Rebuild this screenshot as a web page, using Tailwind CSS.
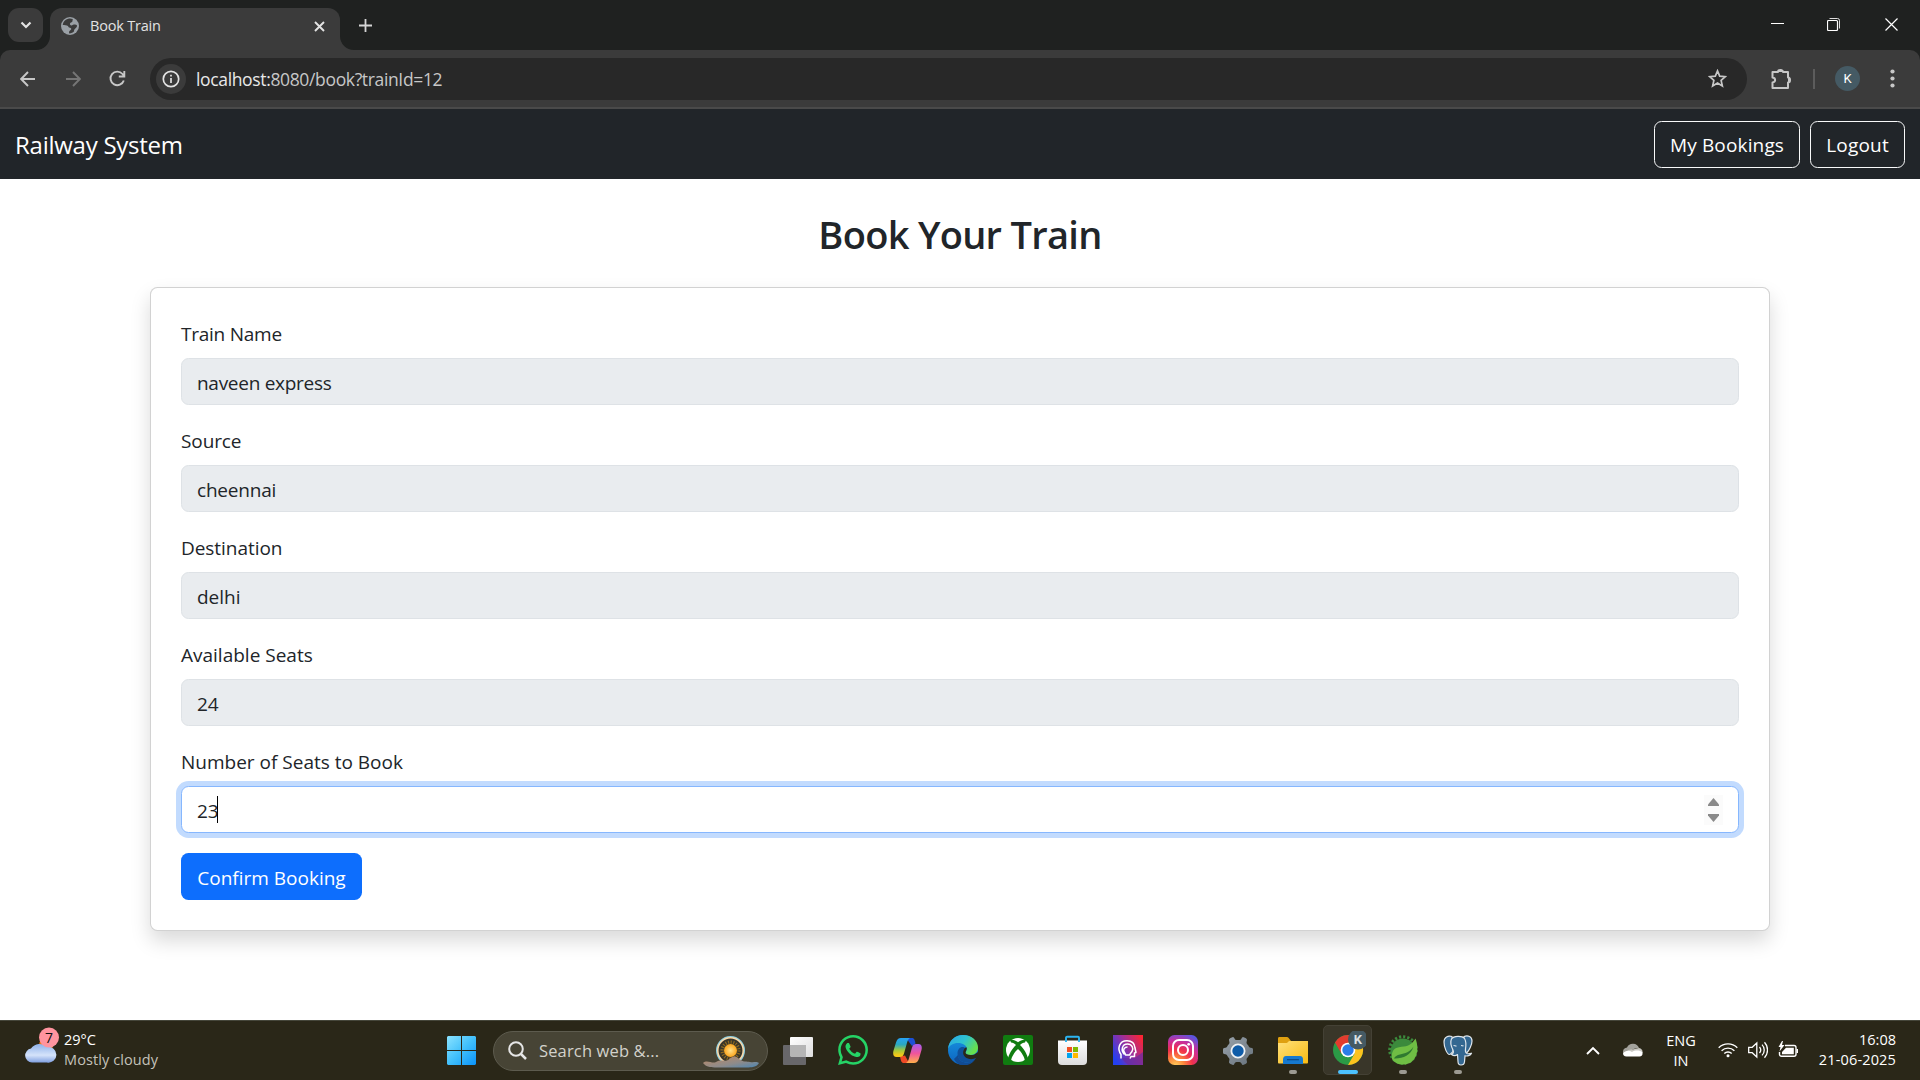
<!DOCTYPE html>
<html lang="en">
<head>
<meta charset="utf-8">
<title>Book Train</title>
<script src="https://cdn.jsdelivr.net/npm/@tailwindcss/browser@4"></script>
</head>
<body class="w-[1920px] h-[1080px] overflow-hidden flex flex-col bg-white font-['Open_Sans',sans-serif] text-[#212529]">

<!-- Browser tab strip -->
<header class="shrink-0 bg-[#1f2120]">
  <div class="h-[50px] flex items-start pt-2 pl-2">
    <button class="w-[35px] h-[34px] rounded-[11px] bg-[#3b3b3b] flex items-center justify-center">
      <svg width="12" height="8" viewBox="0 0 12 8" fill="none" stroke="#e3e3e3" stroke-width="2.2"><path d="M1.5 1.5 6 6l4.500-4.500"/></svg>
    </button>
    <div class="relative ml-[7px] w-[290px] h-[42px] rounded-t-[12px] bg-[#3b3b3b] flex items-center pl-[11px] pr-[15px] pb-[6px]">
      <svg class="absolute -left-[14px] bottom-0" width="14" height="14" viewBox="0 0 14 14"><path d="M14 0v14H0A14 14 0 0 0 14 0z" fill="#3b3b3b"/></svg>
      <svg class="absolute -right-[14px] bottom-0" width="14" height="14" viewBox="0 0 14 14"><path d="M0 0v14h14A14 14 0 0 1 0 0z" fill="#3b3b3b"/></svg>
      <svg width="18" height="18" viewBox="0 0 18 18"><circle cx="9" cy="9" r="9" fill="#9aa0a6"/><path d="M7.200 1.800C4.500 2.500 2.200 4.500 1.700 8c1.700.3 4.200-.2 5.200 1 .9 1 .6 1.500 2 1.700 1.300.2 1.600 1 1.200 1.900-.5 1-1.700 1.200-2 2.200-.2.800 0 1.400.2 1.700 2.200-.2 3.500-1 4.800-2.300-.2-1.200.3-1.700 1-2.400.9-.9 1.700-1.700 2-3-.6-1.300-2-1.200-3.300-1.200-1.200 0-1.200 1-2.300.9-1.300-.1-1.700-1-1.500-2 .3-1.200 1.500-1 2.100-1.600.6-.6.400-1.800.700-2.800-1.500-.6-3.200-.7-4.600-.3z" fill="#3b3b3b"/></svg>
      <span class="ml-[11px] text-[14.5px] tracking-[-0.2px] text-[#e3e3e3]">Book Train</span>
      <svg class="ml-auto" width="11" height="11" viewBox="0 0 11 11" stroke="#e3e3e3" stroke-width="1.900"><path d="M1 1l9 9M10 1l-9 9"/></svg>
    </div>
    <svg class="ml-[19px] mt-[11px]" width="13" height="13" viewBox="0 0 13 13" stroke="#d5d5d5" stroke-width="1.800"><path d="M6.500 0v13M0 6.500h13"/></svg>
    <div class="ml-auto flex items-center h-[34px] -mt-px">
      <svg class="mr-[43px]" width="13" height="13" viewBox="0 0 13 13" stroke="#fff" stroke-width="1"><path d="M0 5.500h13"/></svg>
      <svg class="mr-[45px]" width="13" height="13" viewBox="0 0 13 13" fill="none" stroke="#fff"><rect x=".5" y="2.500" width="10" height="10" rx="1" stroke-width="1.200"/><path d="M2.500 .5h8a2 2 0 0 1 2 2v8" stroke-width="1" stroke="#ddd"/></svg>
      <svg class="mr-[22px]" width="13" height="13" viewBox="0 0 13 13" stroke="#fff" stroke-width="1.200"><path d="M.5 .5l12 12M12.500 .5l-12 12"/></svg>
    </div>
  </div>
  <!-- Toolbar -->
  <div class="h-[59px] rounded-t-[10px] bg-[#3b3b3b] border-b-2 border-[#4a4a4a] flex items-center pl-5">
    <svg width="16" height="16" viewBox="0 0 16 16" fill="none" stroke="#c7c7c7" stroke-width="1.900"><path d="M15 8H1.500M8 1 1.200 8 8 15"/></svg>
    <svg class="ml-[29px]" width="16" height="16" viewBox="0 0 16 16" fill="none" stroke="#757575" stroke-width="1.900"><path d="M1 8h13.500M8 1l6.800 7L8 15"/></svg>
    <svg class="ml-[28px]" width="17" height="17" viewBox="0 0 17 17" fill="none" stroke="#c7c7c7" stroke-width="1.900"><path d="M14.800 10.500A6.800 6.800 0 1 1 13.500 4l1.300 1.700M15.300 1v5.500H9.800"/></svg>
    <div class="ml-[24px] w-[1597px] h-[42px] rounded-full bg-[#282828] flex items-center pl-[6px] pr-5">
      <span class="w-[30px] h-[30px] rounded-full bg-[#3b3b3b] flex items-center justify-center">
        <svg width="18" height="18" viewBox="0 0 18 18" fill="none"><circle cx="9" cy="9" r="7.700" stroke="#e3e3e3" stroke-width="1.700"/><path d="M9 8v5M9 4.800v1.800" stroke="#e3e3e3" stroke-width="1.700"/></svg>
      </span>
      <span class="ml-[10px] pt-px text-[17.5px] tracking-[-0.35px] text-[#c7c7c7]"><span class="text-[#e8e8e8]">localhost:</span>8080/book?trainId=12</span>
      <svg class="ml-auto" width="19" height="19" viewBox="0 0 20 20" fill="none" stroke="#c7c7c7" stroke-width="1.800"><path d="M10 2l2.300 5.500 6 .5-4.500 4 1.300 5.800L10 14.700l-5.100 3.100L6.200 12 1.700 8l6-.5z"/></svg>
    </div>
    <svg class="ml-[23px]" width="23" height="22" viewBox="0 0 23 22"><path d="M2.500 4h5.500a2.500 2 0 0 1 5 0h5v5.500a2 2.500 0 0 1 0 5V20H2.500v-5.500c3.500-.5 3.500-4.500 0-5z" fill="none" stroke="#c7c7c7" stroke-width="2" stroke-linejoin="round"/><path d="M8 4a2.500 2.500 0 0 1 5 0zM18 9.500a2.500 2.500 0 0 1 0 5z" fill="#c7c7c7"/></svg>
    <span class="ml-[20px] w-[2px] h-5 bg-[#5c5c5c]"></span>
    <span class="ml-[20px] w-[25px] h-[25px] rounded-full bg-[#455a64] text-white text-[13px] leading-none font-[Roboto] flex items-center justify-center">K</span>
    <svg class="ml-[30px]" width="5" height="19" viewBox="0 0 5 19" fill="#c7c7c7"><circle cx="2.500" cy="2.500" r="2.100"/><circle cx="2.500" cy="9.500" r="2.100"/><circle cx="2.500" cy="16.500" r="2.100"/></svg>
  </div>
</header>

<!-- Site navigation -->
<nav class="shrink-0 h-[70px] bg-[#212529] text-white flex items-center pl-[15px] pr-[15px] gap-[10px]">
  <span class="mr-auto pt-px text-[24px] tracking-[-0.26px]">Railway System</span>
  <button class="w-[146px] h-[47px] mt-[1px] rounded-[7.5px] border border-[#f8f9fa] text-[19px] tracking-[0.15px] pt-px flex items-center justify-center">My Bookings</button>
  <button class="w-[95px] h-[47px] mt-[1px] rounded-[7.5px] border border-[#f8f9fa] text-[19px] tracking-[0.2px] pt-px flex items-center justify-center">Logout</button>
</nav>

<main class="grow px-[150px] pt-[30px]">
  <h2 class="h-[48px] mb-[30px] text-center text-[38px] leading-[50px] font-semibold tracking-[-0.7px]">Book Your Train</h2>
  <form class="h-[644px] rounded-[7.5px] border border-black/[.175] bg-white p-[30px] shadow-[0_10px_20px_rgba(0,0,0,0.15)] text-[19px] leading-[30px]">
    <div class="mb-5">
      <label class="block h-[30px] pt-px mb-[10px] tracking-[-0.25px]">Train Name</label>
      <div class="h-[47px] rounded-[7.5px] border border-[#dee2e6] bg-[#e9ecef] px-[15px] pt-[2px] flex items-center tracking-[-0.28px]">naveen express</div>
    </div>
    <div class="mb-5">
      <label class="block h-[30px] pt-px mb-[10px] tracking-[-0.1px]">Source</label>
      <div class="h-[47px] rounded-[7.5px] border border-[#dee2e6] bg-[#e9ecef] px-[15px] pt-[2px] flex items-center tracking-[-0.2px]">cheennai</div>
    </div>
    <div class="mb-5">
      <label class="block h-[30px] pt-px mb-[10px] tracking-[-0.05px]">Destination</label>
      <div class="h-[47px] rounded-[7.5px] border border-[#dee2e6] bg-[#e9ecef] px-[15px] pt-[2px] flex items-center">delhi</div>
    </div>
    <div class="mb-5">
      <label class="block h-[30px] pt-px mb-[10px]">Available Seats</label>
      <div class="h-[47px] rounded-[7.5px] border border-[#dee2e6] bg-[#e9ecef] px-[15px] pt-[2px] flex items-center">24</div>
    </div>
    <div class="mb-5">
      <label class="block h-[30px] pt-px mb-[10px]">Number of Seats to Book</label>
      <div class="h-[47px] rounded-[7.5px] border border-[#86b7fe] bg-white px-[15px] flex items-center shadow-[0_0_0_5px_rgba(13,110,253,0.25)]">
        <span class="pt-[2px] tracking-[-0.2px]">23</span><span class="-ml-px w-px h-[27px] bg-black"></span>
        <span class="ml-auto w-[19px] h-[30px] bg-[#fbfbfb] flex flex-col items-center justify-between py-[3px]">
          <svg width="11" height="8" viewBox="0 0 11 8" fill="#8a8a8a"><path d="M5.500 0 11 6.500V8H0V6.500z"/></svg>
          <svg width="11" height="8" viewBox="0 0 11 8" fill="#8a8a8a"><path d="M5.500 8 11 1.500V0H0v1.500z"/></svg>
        </span>
      </div>
    </div>
    <button type="button" class="w-[181px] h-[47px] pt-[2px] rounded-[7.5px] bg-[#0d6efd] text-white flex items-center justify-center">Confirm Booking</button>
  </form>
</main>

<!-- Desktop taskbar -->
<footer class="shrink-0 h-[60px] bg-[#2a2718] border-t border-[#45463a] flex items-center text-white text-[14.5px]">
  <div class="w-[434px] h-full flex items-start pl-[24px]">
    <svg class="mt-[6px]" width="36" height="38" viewBox="0 0 36 38">
      <defs><linearGradient id="cl" x1="0" y1="0" x2="0" y2="1"><stop offset="0" stop-color="#8fb2ea"/><stop offset=".6" stop-color="#d5e3fa"/><stop offset="1" stop-color="#7f9fe0"/></linearGradient></defs>
      <circle cx="22" cy="18" r="7" fill="#f07a1a"/>
      <path d="M8 35.500a7 7 0 0 1-1-13.900A10.500 10.500 0 0 1 23 20a7.900 7.900 0 1 1 0 15.500z" fill="url(#cl)"/>
      <circle cx="25" cy="10.500" r="10" fill="#ff949f"/>
      <text x="25" y="15.500" text-anchor="middle" font-size="14" font-family="Open Sans" fill="#111">7</text>
    </svg>
    <div class="ml-[4px] mt-[9px] leading-5 flex flex-col items-start"><span>29°C</span><span class="tracking-[0.1px] text-[#c4c2ba]">Mostly cloudy</span></div>
  </div>
  <div class="w-[55px] flex justify-center">
    <svg width="29" height="29" viewBox="0 0 29 29"><defs><linearGradient id="win" x1="0" y1="0" x2="1" y2="1"><stop offset="0" stop-color="#8be3ff"/><stop offset=".5" stop-color="#42c0fb"/><stop offset="1" stop-color="#0a93fb"/></linearGradient></defs><path d="M1 0h13v14H0V1zM15 0h13l1 1v13H15zM0 15h14v14H1l-1-1zM15 15h14v13l-1 1H15z" fill="url(#win)"/></svg>
  </div>
  <div class="ml-[4px] w-[275px] h-[40px] rounded-full bg-[#474435] border border-[#5d5b4e] flex items-center pl-[14px] pr-[8px]">
    <svg width="19" height="19" viewBox="0 0 19 19" fill="none" stroke="#e6e6e6" stroke-width="2"><circle cx="8" cy="8" r="6.800"/><path d="M13 13l5 5" stroke-width="2.500"/></svg>
    <span class="ml-[12px] pt-px text-[16.5px] tracking-[0.15px] text-[#d3d2cb]">Search web &amp;...</span>
    <svg class="ml-auto" width="56" height="34" viewBox="0 0 56 34">
      <defs><linearGradient id="hill" x1="0" y1="0" x2="1" y2="1"><stop offset="0" stop-color="#c08a62"/><stop offset=".6" stop-color="#8d8b8b"/><stop offset="1" stop-color="#4b86b4"/></linearGradient><radialGradient id="sun"><stop offset="0" stop-color="#ffe08a"/><stop offset="1" stop-color="#fba51c"/></radialGradient></defs>
      <circle cx="27.500" cy="16.500" r="13.600" fill="#38352a" stroke="#8fd0e2" stroke-width="1.800"/>
      <circle cx="27.500" cy="16.500" r="12.700" fill="none" stroke="#fbd9a8" stroke-width="1.500"/>
      <circle cx="27.500" cy="16.500" r="8.300" fill="none" stroke="#8f6a1e" stroke-width="3.500" stroke-dasharray="1.100 1.500"/>
      <circle cx="27.500" cy="16.500" r="6.500" fill="url(#sun)"/>
      <path d="M0 29c4-4 9 1 13-1 5-3 9 0 12-2 4-3 6-5 10-2 5 5 9 3 12 4 4 1 6-1 9 1-2 4-8 4.500-12 4.500H14C8 33.500 3 33 0 29z" fill="url(#hill)"/>
    </svg>
  </div>
  <div class="ml-[2px] flex h-full">
    <div class="w-[55px] flex items-center justify-center">
      <svg width="30" height="28" viewBox="0 0 30 28"><defs><linearGradient id="tv" x1="0" y1="0" x2="1" y2="1"><stop offset="0" stop-color="#fff"/><stop offset="1" stop-color="#dedede"/></linearGradient></defs><rect x="7" y="0" width="23" height="20" rx="1" fill="url(#tv)"/><rect x="0" y="8" width="23" height="20" rx="1" fill="#68676a"/><path d="M7 8h16v12H8l-1-1z" fill="#b5b5b5"/></svg>
    </div>
    <div class="w-[55px] flex items-center justify-center">
      <svg class="-mt-px" width="30" height="30" viewBox="0 0 24 24" fill="#25d366"><path d="M17.472 14.382c-.297-.149-1.758-.867-2.030-.967-.273-.099-.471-.148-.67.150-.197.297-.767.966-.940 1.164-.173.199-.347.223-.644.075-.297-.150-1.255-.463-2.390-1.475-.883-.788-1.480-1.761-1.653-2.059-.173-.297-.018-.458.130-.606.134-.133.298-.347.446-.520.149-.174.198-.298.298-.497.099-.198.050-.371-.025-.520-.075-.149-.669-1.612-.916-2.207-.242-.579-.487-.500-.669-.510-.173-.008-.371-.010-.570-.010-.198 0-.520.074-.792.372-.272.297-1.040 1.016-1.040 2.479 0 1.462 1.065 2.875 1.213 3.074.149.198 2.096 3.200 5.077 4.487.709.306 1.262.489 1.694.625.712.227 1.360.195 1.871.118.571-.085 1.758-.719 2.006-1.413.248-.694.248-1.289.173-1.413-.074-.124-.272-.198-.570-.347m-5.421 7.403h-.004a9.870 9.870 0 0 1-5.031-1.378l-.361-.214-3.741.982.998-3.648-.235-.374a9.860 9.860 0 0 1-1.510-5.260c.001-5.450 4.436-9.884 9.888-9.884 2.640 0 5.122 1.030 6.988 2.898a9.825 9.825 0 0 1 2.893 6.994c-.003 5.450-4.437 9.884-9.885 9.884m8.413-18.297A11.815 11.815 0 0 0 12.050 0C5.495 0 .160 5.335.157 11.892c0 2.096.547 4.142 1.588 5.945L.057 24l6.305-1.654a11.882 11.882 0 0 0 5.683 1.448h.005c6.554 0 11.890-5.335 11.893-11.893a11.821 11.821 0 0 0-3.480-8.413z"/></svg>
    </div>
    <div class="w-[55px] flex items-center justify-center">
      <svg class="-mt-px" width="29" height="27" viewBox="0 0 29 27"><defs><linearGradient id="c1" x1="0" y1="0" x2="0" y2="1"><stop offset="0" stop-color="#27a3f5"/><stop offset=".35" stop-color="#2ba8c0"/><stop offset=".65" stop-color="#a5c83a"/><stop offset=".9" stop-color="#f3c818"/></linearGradient><linearGradient id="c2" x1="0" y1="0" x2="0" y2="1"><stop offset="0" stop-color="#a45cf0"/><stop offset=".5" stop-color="#f0559b"/><stop offset="1" stop-color="#ffb04a"/></linearGradient></defs>
      <path d="M13 1h6c2 0 2.700 1.500 3.500 5.500L19 9z" fill="#1b50d6"/><path d="M16 26h-5c-3 0-3-2.500-4-6.500l5-1z" fill="#ee4a26"/>
      <path d="M8 1h9c-2 1-2.500 3-3.200 5.500L11 16.500C10.300 19 9 20 7 20H3.500C.5 20-.3 17.500.4 14L3 5.500C4 2.300 5.500 1 8 1z" fill="url(#c1)"/>
      <path d="M21 26h-8c2-1 2.500-3 3.200-5.500L19 10.500C19.700 8 21 7 23 7h2.500c3 0 3.800 2.500 3 6L26 21.500C25 24.700 23.500 26 21 26z" fill="url(#c2)"/></svg>
    </div>
    <div class="w-[55px] flex items-center justify-center">
      <svg class="-mt-px" width="30" height="30" viewBox="0 0 30 30"><defs><linearGradient id="e1" x1="0" y1="0" x2="1" y2=".5"><stop offset="0" stop-color="#2aa6e6"/><stop offset=".55" stop-color="#2fc3cf"/><stop offset="1" stop-color="#67e04e"/></linearGradient><linearGradient id="e2" x1="0" y1="0" x2="0" y2="1"><stop offset="0" stop-color="#1795e2"/><stop offset="1" stop-color="#0d63bf"/></linearGradient></defs>
      <circle cx="15" cy="15" r="15" fill="url(#e2)"/>
      <path d="M10 20c0 5 5 8.500 10.500 7.500 3-.5 5-2 6.800-4C25 31 11 34 6 24z" fill="#114b93"/>
      <path d="M0 14C1 5 7.500 0 15 0c9 0 15 6 15 12.500 0 4.500-3 7.500-7.500 7.500-3.500 0-5-1.500-5-2.500s1.300-1.300 1.300-4c0-3-3.800-5.500-8.800-5.500C5 8 1.500 10.500 0 14z" fill="url(#e1)"/>
      <path d="M18 14c-3-4-8.500-1.500-8.500 4.500 0 6.500 6 10 11.500 8.800 3-.6 5.500-2.300 7.200-4.800.3-.7-.4-1.200-1-.8-4.500 2.300-11 .8-10-4.700.2-1 .8-1.800.8-3z" fill="#10509a"/>
      <path d="M18.800 12.500c.3 2.500-1.300 4-1.300 5 0 1.500 3 3.500 8.500 2.200L30 17v5l-2 1c-3 1.500-7 1.500-9.500 0-4-2.500-4.500-7-1-10.500z" fill="#2a2718"/></svg>
    </div>
    <div class="w-[55px] flex items-center justify-center">
      <svg class="-mt-px" width="30" height="30" viewBox="0 0 30 30"><rect width="30" height="30" rx="2" fill="#107c10"/><circle cx="15" cy="15" r="12" fill="#fff"/><path d="M7 5.200C9.500 4.200 12.500 5.500 15 7.200c2.500-1.700 5.500-3 8-2L22 7.500c-2 0-3.500 1-5 2.500 4 4 7.500 9.500 8 14l-3 2c-.5-4-3.500-9-7-12-3.500 3-6.500 8-7 12l-3-2c.5-4.500 4-10 8-14-1.500-1.500-3-2.500-5-2.500z" fill="#107c10"/></svg>
    </div>
    <div class="w-[55px] flex items-center justify-center">
      <svg class="-mt-px" width="29" height="30" viewBox="0 0 29 30"><defs><linearGradient id="st" x1="0" y1="0" x2="0" y2="1"><stop offset="0" stop-color="#fff"/><stop offset="1" stop-color="#dcdcdc"/></linearGradient></defs><path d="M0 5.500h29V26a4 4 0 0 1-4 4H4a4 4 0 0 1-4-4z" fill="url(#st)"/><path d="M8 7V2.800C8 2 8.500 1.800 9 1.800h11c.6 0 1 .4 1 1V7" fill="none" stroke="#2cb5f0" stroke-width="1.900"/><path fill="#f25022" d="M9 12h5v5H9z"/><path fill="#7fba00" d="M15 12h5v5h-5z"/><path fill="#00a4ef" d="M9 18h5v5H9z"/><path fill="#ffb900" d="M15 18h5v5h-5z"/></svg>
    </div>
    <div class="w-[55px] flex items-center justify-center">
      <svg class="-mt-px" width="30" height="30" viewBox="0 0 30 30"><defs><linearGradient id="pi" x1="0" y1=".7" x2="1" y2=".1"><stop offset="0" stop-color="#2440f0"/><stop offset=".5" stop-color="#9a2f9c"/><stop offset="1" stop-color="#ff2430"/></linearGradient></defs><path fill="url(#pi)" d="M0 0h30v30H0z"/><path d="M8 23h14l8-6v13H15z" fill="#6a2ca0" fill-opacity=".7"/><g fill="none" stroke="#fff" stroke-width="1.500" stroke-linejoin="round"><path d="M8 23.500v-4C4 14 6 5.800 14 5.800c5 0 7.700 3 8 7.200l1 4.500-1.500.5v3.500h-3.500l-1 2"/><path d="M11.500 19.500C7.500 15.500 9 9 14.500 9c4.500 0 6.500 4.500 4.500 7.500-1 1.500-2 2-2.200 3.500h-4.300c0-1.500-.7-2-1.300-3-1.500-2.500.3-5 3.300-5"/></g></svg>
    </div>
    <div class="w-[55px] flex items-center justify-center">
      <svg class="-mt-px" width="30" height="30" viewBox="0 0 30 30"><defs><radialGradient id="ig" cx=".25" cy="1.050" r="1.150"><stop offset="0" stop-color="#ffd560"/><stop offset=".25" stop-color="#fd8a3c"/><stop offset=".5" stop-color="#f0314c"/><stop offset=".75" stop-color="#c92f9b"/><stop offset="1" stop-color="#5a55e0"/></radialGradient></defs><rect width="30" height="30" rx="6.500" fill="url(#ig)"/><g fill="none" stroke="#fff" stroke-width="2"><rect x="5" y="5" width="20" height="20" rx="6"/><circle cx="15" cy="15" r="5"/></g><circle cx="20.700" cy="9.300" r="1.400" fill="#fff"/></svg>
    </div>
    <div class="w-[55px] flex items-center justify-center">
      <svg width="30" height="28" viewBox="0 0 30 28"><defs><linearGradient id="gr" x1="0" y1="0" x2="1" y2="1"><stop offset="0" stop-color="#9aa3ab"/><stop offset="1" stop-color="#66717b"/></linearGradient></defs><path d="M7.500 1 10 0q1 0 1.500 1.500Q12 3 13.500 3h3Q18 3 18.500 1.500 19 0 20 0l2.500 1q1.800.8 1.500 2l-.5 2.500Q23.500 7 25 8l.5 1q.7 1.500 2 1.700l1.500.3q1 .3 1 1.500v3q0 1.200-1 1.500l-1.500.3q-1.300.2-2 1.700l-.5 1q-1.500 1-1.500 2.500l.5 2.500q.3 1.200-1.500 2L20 28q-1 0-1.500-1.500Q18 25 16.500 25h-3q-1.500 0-2 1.500Q11 28 10 28l-2.500-1q-1.800-.8-1.500-2l.5-2.500Q6.500 21 5 20l-.5-1q-.7-1.500-2-1.700L1 17q-1-.3-1-1.500v-3Q0 11.300 1 11l1.500-.3q1.300-.2 2-1.700L5 8q1.500-1 1.500-2.500L6 3q-.3-1.200 1.500-2z" fill="url(#gr)"/><circle cx="15" cy="14" r="6.600" fill="#0f5ca8" stroke="#f0f2f4" stroke-width="1.800"/></svg>
    </div>
    <div class="relative w-[55px] flex items-center justify-center">
      <svg width="30" height="27" viewBox="0 0 30 27"><defs><linearGradient id="fo" x1="0" y1="0" x2="1" y2="1"><stop offset="0" stop-color="#ffe07a"/><stop offset="1" stop-color="#f9bb12"/></linearGradient></defs><path d="M0 1.500C0 .5.500 0 1.500 0h7c1 0 1.500.3 2.200 1L13 4v4H0z" fill="#dfa010"/><path d="M0 6h8.500c1 0 2-2 3-2H30v21.500c0 .5-.5 1-1 1H1c-.5 0-1-.5-1-1z" fill="url(#fo)"/><path d="M5 27v-4.500C5 20 6.500 19 8 19h14c2 0 3 1.500 3 3.500V27z" fill="#1679cf"/><rect x="9" y="22" width="12" height="1.300" fill="#0b4c8c"/></svg>
      <span class="absolute bottom-[6px] left-[23.5px] w-2 h-1 rounded-full bg-[#9c9a92]"></span>
    </div>
    <div class="relative w-[55px] flex items-center justify-center">
      <span class="absolute left-[3px] top-[4px] w-[49px] h-[50px] rounded-[5px] bg-[#393629] border border-[#444135]"></span>
      <svg class="relative -mt-px" width="36" height="38" viewBox="0 0 36 38"><g transform="translate(3 4)"><circle cx="15" cy="15" r="15" fill="#2b9a46"/><path d="M15 15 2 7.500A15 15 0 0 1 28 7.500H15z" fill="#e33b2e"/><path d="M2 7.500 8.500 18.700 15 15V7H4z" fill="#e33b2e"/><path d="M15 7.500h13A15 15 0 0 1 15 30l6.500-11.300z" fill="#fcc31e"/><circle cx="15" cy="15" r="7.300" fill="#fff"/><circle cx="15" cy="15" r="5.700" fill="#2b7de9"/></g><circle cx="28" cy="8.500" r="10" fill="#455a64"/><text x="28" y="13.300" text-anchor="middle" font-size="13" font-weight="700" font-family="Roboto" fill="#dce1e4">K</text></svg>
      <span class="absolute bottom-[6px] left-[17.5px] w-5 h-1 rounded-full bg-[#4cc2ff]"></span>
    </div>
    <div class="relative w-[55px] flex items-center justify-center">
      <svg class="-mt-px" width="30" height="30" viewBox="0 0 30 30"><circle cx="15" cy="16" r="12.500" fill="#3b8a3c"/><circle cx="15" cy="15" r="13.300" fill="none" stroke="#3b8a3c" stroke-width="3" stroke-dasharray="2.200 1.960"/><path d="M27.500 3.500C30 10 31 20 24 26.500 17 32 7 29.500 4 24 3 13 8 12.500 16 11.500 21 11 25 8 27.500 3.500z" fill="#6fbe44"/><path d="M6 23.500c8 .5 17-3 19.500-12C22 17 17 18.500 12 19.500c-3 .6-5 2-6 4z" fill="#2f7a30"/></svg>
      <span class="absolute bottom-[6px] left-[23.5px] w-2 h-1 rounded-full bg-[#9c9a92]"></span>
    </div>
    <div class="relative w-[55px] flex items-center justify-center">
      <svg class="-mt-px" width="30" height="31" viewBox="0 0 30 31" fill="#336791" stroke="#dfe6ec" stroke-width="1.200" stroke-linejoin="round"><path d="M9 1.500C5 .3 1 2 1 7c0 5 3 12.500 5.500 12.500 1.500 0 2.500-2 3.500-3z"/><path d="M21 1.500c4-1.500 8 0 8 4.500 0 4-3 9.500-5 11.500l-4-1z"/><path d="M8.500 4C10.500.8 19 .3 21.500 3.500c2 3 1.500 7 1 10.500-.3 2 .5 4 1.500 4.500 1.500.7 3.500 0 4.500-.3-1 2.300-4.500 3.300-6.500 2.500l-.5 6c-.2 2-1.500 3.300-3.500 3.300s-3-1.500-3-3.500l-.5-7c-2 1.500-4.500 1-6 0 2-1 2.500-2 1.500-4.500C8.500 12 7 7 8.500 4z"/><path d="M10.500 10.500c1 0 2 .2 3 .7M18 10.500c1 0 1.500 0 2.500.5" fill="none"/></svg>
      <span class="absolute bottom-[6px] left-[23.5px] w-2 h-1 rounded-full bg-[#9c9a92]"></span>
    </div>
  </div>
  <div class="ml-auto mr-[24px] h-full flex items-center">
    <svg class="mr-[23px]" width="14" height="9" viewBox="0 0 14 9" fill="none" stroke="#fff" stroke-width="1.900"><path d="M1 8l6-6 6 6"/></svg>
    <svg class="mr-[23px] -mt-px" width="20" height="14" viewBox="0 0 20 14"><path d="M0 10a5 5 0 0 1 4-5.500A6.500 6.500 0 0 1 16 5c-6 0-9 3-12 7.500z" fill="#a3a29c"/><path d="M1 12C3 8 6 6 9.500 6.500L16 5a4.500 4.500 0 0 1 3.500 5z" fill="#c9c8c3"/><path d="M3.500 13.500C1 13.500 0 12 0 10.500 2 7.500 6 7 9 9c3-2 8-2 10.500.5.500 2.500-1 4-3 4z" fill="#fff"/></svg>
    <div class="w-[30px] mr-[22px] leading-5 flex flex-col items-center"><span>ENG</span><span>IN</span></div>
    <svg class="mr-[10px] -mt-[2px]" width="20" height="16" viewBox="0 0 20 16" fill="none" stroke="#fff" stroke-width="1.400"><path d="M.7 5.800a13 13 0 0 1 18.600 0M3.600 8.800a9 9 0 0 1 12.800 0M6.300 11.600a5.200 5.200 0 0 1 7.400 0"/><circle cx="10" cy="13.800" r="1.500" fill="#fff" stroke="none"/></svg>
    <svg class="mr-[10px] -mt-px" width="20" height="18" viewBox="0 0 20 18" fill="none" stroke="#fff" stroke-width="1.300"><path d="M.7 6.300h3.500L8.800 2v14l-4.600-4.300H.7zM11.500 6c1.500 1.800 1.500 4.200 0 6M14 3.600c3 3 3 7.800 0 10.800M16.500 1.200c4 4.500 4 11 0 15.600"/></svg>
    <svg class="mr-[20px] -mt-[3px]" width="20" height="17" viewBox="0 0 20 17" fill="none" stroke="#fff" stroke-width="1.400"><path d="M7 4.500h9a2 2 0 0 1 2 2v6.800a2 2 0 0 1-2 2H3.500a2 2 0 0 1-2-2V11"/><path d="M4 13.200V11l4-4.200h7.800v6.400z" fill="#fff" stroke="none"/><path d="M18.500 8h1.500v4h-1.500zM4 0 .5 6h2L1.500 10.500 6.500 4H4L5 0z" fill="#fff" stroke="none"/></svg>
    <div class="w-[78px] leading-5 -mt-[2px] flex flex-col items-end"><span>16:08</span><span class="tracking-[0.15px]">21-06-2025</span></div>
  </div>
</footer>
</body>
</html>
